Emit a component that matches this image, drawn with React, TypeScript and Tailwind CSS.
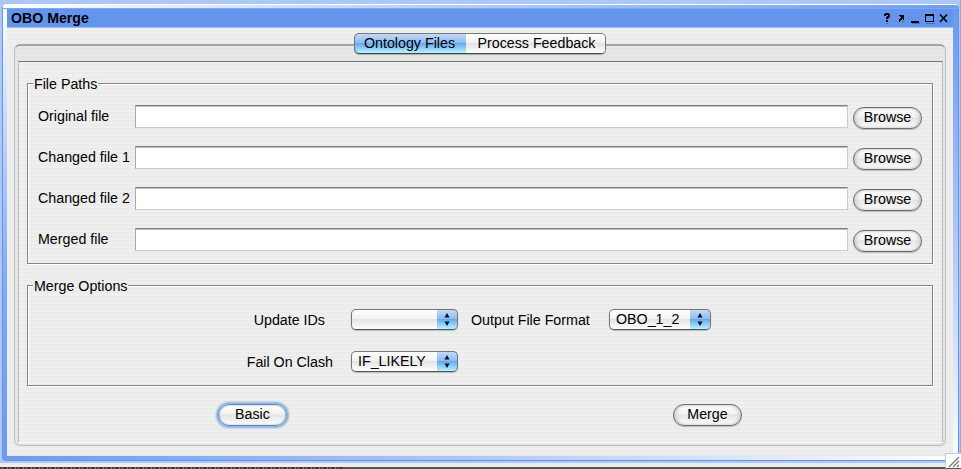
import React from "react";

const STRIPES =
  "bg-[repeating-linear-gradient(to_bottom,#efefef_0px,#efefef_2px,#ebebeb_2px,#ebebeb_4px)]";
const GLOSS =
  "bg-[linear-gradient(to_bottom,#ffffff_0%,#f2f2f2_45%,#e4e4e4_50%,#f1f1f1_75%,#ffffff_100%)]";
const AQUA =
  "bg-[linear-gradient(to_bottom,#c3daf5_0%,#8fbdf0_45%,#67a9f0_50%,#8fcdf9_75%,#b5f5ff_100%)]";

function Button({ label, focused = false }: { label: string; focused?: boolean }) {
  return (
    <button
      className={`flex h-[22px] w-[69px] shrink-0 items-center justify-center rounded-full border pb-px ${GLOSS} ${
        focused
          ? "border-[#5f8db8] shadow-[0_0_2px_2px_#86b3dd,inset_0_0_2px_#6f9cc4]"
          : "border-[#6a6a6a] shadow-[0_1px_1px_#bbbbbb,inset_2px_0_3px_#cccccc,inset_-2px_0_3px_#cccccc]"
      }`}
    >
      {label}
    </button>
  );
}

function Select({ value, className }: { value: string; className: string }) {
  return (
    <div
      className={`flex h-[21px] shrink-0 overflow-hidden rounded-[5px] border border-[#777777] border-b-[#555555] shadow-[0_1px_1px_#bbbbbb] ${GLOSS} ${className}`}
    >
      <span className="flex-1 pl-[6px] leading-[18px]">{value}</span>
      <span
        className={`-my-px -mr-px flex w-[21px] items-center justify-center rounded-r-[5px] border-y border-r border-[#1c3f9c] border-b-[#3c6080] pr-px ${AQUA}`}
      >
        <svg width="6" height="13" viewBox="0 0 6 13">
          <path d="M3 0L5.5 4.5H.5zM3 13L5.5 8.5H.5z" fill="#001020" />
        </svg>
      </span>
    </div>
  );
}

function Group({ title, className, children }: { title: string; className: string; children: React.ReactNode }) {
  return (
    <section className={`border border-[#858585] shadow-[1px_1px_0_#ffffff,inset_1px_1px_0_#ffffff] ${className}`}>
      <h2 className={`-mt-[9px] ml-[5px] h-[18px] w-fit px-px leading-[18px] ${STRIPES}`}>{title}</h2>
      {children}
    </section>
  );
}

const files = ["Original file", "Changed file 1", "Changed file 2", "Merged file"];

export default function App() {
  return (
    <div className="relative h-[469px] w-[961px] overflow-hidden bg-[#ececec] font-['Liberation_Sans',Arial,sans-serif] text-[14.25px] text-black">
      <div className="h-[463px] border-r border-[#a3a9b5] bg-[#adc8f5] pl-[2px] pt-[4px]">
        <div className="h-[457px] w-[957px] rounded-t-[5px] rounded-bl-[4px] border border-[#6495ed] border-t-white bg-[linear-gradient(to_right,#ffffff,#6f9df0)]">
          <div className="flex h-full flex-col rounded-bl-[4px] bg-[linear-gradient(to_bottom,#ffffff,#b4cbf7_35%,#85abf2_60%,#6c9aed)] bg-[length:4px_100%] bg-no-repeat">
            <div className="h-1 shrink-0 rounded-t-[4px] border-b border-[#7da7f2] bg-[linear-gradient(to_right,#ffffff,#b7cdf7_45%,#6f9df0)]" />
            <div className="flex min-h-0 flex-1 bg-[linear-gradient(to_bottom,#6899f0,#b5cbf8_55%,#fafcff)] bg-[length:5px_100%] bg-right bg-no-repeat pl-1 pr-[5px]">
              <div className="flex flex-1 flex-col">
                <header className="flex h-[19px] shrink-0 items-center justify-between rounded-tr-[4px] border-b border-[#9dbef6] bg-[#6495ed] pl-1 pr-[5px]">
                  <h1 className="pt-px text-[14.15px] font-bold">OBO Merge</h1>
                  <svg width="66" height="12" viewBox="0 0 66 12" fill="#000000" shapeRendering="crispEdges">
                    <g fill="#4a6fae">
                      <path d="M6 4h2v3H6zM4 11h2v1H4zM20 9h2v1h-2zM30 11h8v1h-8zM44 11h9v1h-9z" />
                    </g>
                    <path d="M3 1h4v1h1v3H7v1H6v1H4V5h1V4h1V3H4v1H2V2h1zM4 8h2v2H4z" />
                    <path d="M17 3h5v5h-1V7h-1v1h-1v1h-1v1h-1V7h1V6h1V5h-1V4h-1z" />
                    <path d="M29 9h8v2h-8z" />
                    <path fillRule="evenodd" d="M43 2h9v8h-9zM44 4v5h7V4z" />
                    <path
                      d="M58 2.5l7 7.5M65 2.5L58 10"
                      fill="none"
                      stroke="#000000"
                      strokeWidth="1.6"
                      shapeRendering="auto"
                    />
                  </svg>
                </header>
                <main className={`flex h-[428px] flex-col px-[7px] pt-[5px] ${STRIPES}`}>
                  <nav className="z-10 flex h-[21px] w-[252px] self-center overflow-hidden rounded-[5px] border border-[#777777] border-b-[#444444] shadow-[0_1px_1px_#aaaaaa]">
                    <button className={`-ml-px -mt-px w-[112px] rounded-l-[5px] border-l border-t border-[#172f8c] pb-[2px] pr-[2px] leading-[18px] ${AQUA}`}>
                      Ontology Files
                    </button>
                    <button className={`flex-1 pl-[2px] leading-[19px] ${GLOSS}`}>Process Feedback</button>
                  </nav>
                  <div className="-mt-[10px] h-[402px] rounded-[6px] border border-[#bebebe] border-t-2 border-t-[#a5a5a5] bg-[#e5e5e5] bg-[repeating-linear-gradient(to_bottom,#e8e8e8_0px,#e8e8e8_2px,#e3e3e3_2px,#e3e3e3_4px)] pl-[3px] pr-[2px] pt-[15px]">
                    <div className={`h-[382px] border border-[#bcbcbc] border-b-white border-t-[#777777] pl-2 pr-[9px] pt-[21px] ${STRIPES}`}>
                      <Group title="File Paths" className="h-[181px]">
                        <div className="mt-[12px] flex flex-col gap-[17px] pl-[10px]">
                          {files.map((name) => (
                            <label key={name} className="flex h-6 items-center">
                              <span className="w-[97px] shrink-0 whitespace-nowrap pb-px">{name}</span>
                              <input className="h-[23px] w-[713px] self-start border border-[#cccccc] border-l-[#aaaaaa] border-t-[#7d7d7d] bg-white px-1 shadow-[inset_0_1px_0_#c0c0c0] outline-none" />
                              <span className="ml-[5px] pt-[2px]">
                                <Button label="Browse" />
                              </span>
                            </label>
                          ))}
                        </div>
                      </Group>
                      <Group title="Merge Options" className="mt-[21px] h-[101px]">
                        <div className="mt-[14px] flex h-[21px] items-center">
                          <span className="w-[297px] pt-[2px] text-right leading-[21px]">Update IDs</span>
                          <Select value="" className="ml-[26px] w-[107px]" />
                          <span className="ml-[13px] w-[121px] whitespace-nowrap pt-[2px]">Output File Format</span>
                          <Select value="OBO_1_2" className="ml-[17px] w-[102px]" />
                        </div>
                        <div className="mt-[21px] flex h-[21px] items-center">
                          <span className="w-[305px] pt-[2px] text-right">Fail On Clash</span>
                          <Select value="IF_LIKELY" className="ml-[18px] w-[107px]" />
                        </div>
                      </Group>
                      <div className="mt-[18px] flex pl-[191px]">
                        <Button label="Basic" focused />
                        <span className="w-[386px]" />
                        <Button label="Merge" />
                      </div>
                    </div>
                  </div>
                </main>
                <div className="-ml-1 -mr-[5px] h-1 shrink-0 bg-[linear-gradient(to_right,#6c9aed,#b0c8f7_50%,#ffffff)]" />
              </div>
            </div>
          </div>
        </div>
      </div>
      <div className="mt-[4px] h-[2px] bg-[repeating-linear-gradient(90deg,#702030_0px,#555555_3px,#50151f_5px,#777777_8px)] bg-[length:343px_2px] bg-no-repeat">
        <div className="ml-[343px] h-[2px] bg-[#555555]" />
      </div>
      <div className="absolute bottom-px right-0 h-[15px] w-4 border-l border-t border-[#cccccc] bg-white">
        <svg width="15" height="14" viewBox="0 0 15 14" stroke="#777777" strokeWidth="1.2">
          <path d="M3 13L13 3M7 13l6-6M11 13l2-2" />
        </svg>
      </div>
    </div>
  );
}
